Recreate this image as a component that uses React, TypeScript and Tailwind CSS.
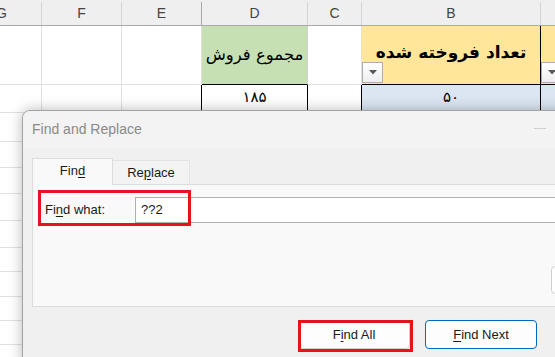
import React from "react";

const FilterBtn = () => (
  <div className="absolute left-0 top-[36px] w-[21px] h-[21px] border border-[#adadad] bg-gradient-to-b from-white to-[#eeeeee] flex items-center justify-center">
    <svg width="8" height="5" viewBox="0 0 8 5">
      <path d="M0 0 L8 0 L4 4.5 Z" fill="#5a5a5a" />
    </svg>
  </div>
);

const U = ({ children }: { children: React.ReactNode }) => (
  <span className="underline underline-offset-[2px] decoration-[1px]">{children}</span>
);

export default function App() {
  const grid = "border-r border-b border-[#e1e1e1]";
  const lowerRows = [29, 26, 26, 27, 27, 24, 25, 24, 24, 24];
  return (
    <div className="relative w-[555px] h-[357px] overflow-hidden bg-white font-['Liberation_Sans',sans-serif]">
      {/* spreadsheet */}
      <div className="ml-[-38px] flex flex-col">
        {/* header */}
        <div className="flex h-[26px] bg-[#efefef] border-b border-[#a9a9a9] text-[14px] text-[#444]">
          <div className="w-[80px] shrink-0 flex items-center justify-center border-r border-[#d4d4d4] mt-[2px]">G</div>
          <div className="w-[80px] shrink-0 flex items-center justify-center border-r border-[#d4d4d4] mt-[2px]">F</div>
          <div className="w-[80px] shrink-0 flex items-center justify-center border-r border-[#a8a8a8] mt-[2px]">E</div>
          <div className="w-[106px] shrink-0 flex items-center justify-center border-r border-[#d4d4d4] mt-[2px]">D</div>
          <div className="w-[54px] shrink-0 flex items-center justify-center border-r border-[#d4d4d4] mt-[2px]">C</div>
          <div className="w-[179px] shrink-0 flex items-center justify-center border-r border-[#d4d4d4] mt-[2px]">B</div>
          <div className="w-[80px] shrink-0 mt-[2px]" />
        </div>
        {/* row 1 */}
        <div className="flex h-[59px]">
          <div className={`w-[80px] shrink-0 ${grid}`} />
          <div className={`w-[80px] shrink-0 ${grid}`} />
          <div className={`w-[80px] shrink-0 ${grid}`} />
          <div className="w-[106px] shrink-0 bg-[#c6e0b4] border-r border-[#d0d0d0] border-b border-b-black flex items-center justify-center font-['DejaVu_Sans',sans-serif] text-[16.5px] text-black whitespace-nowrap" dir="rtl">
            مجموع فروش
          </div>
          <div className={`w-[54px] shrink-0 ${grid}`} />
          <div className="relative w-[179px] shrink-0 bg-[#ffe699] border-r border-black border-b flex items-center justify-center pb-[5px] font-['DejaVu_Sans',sans-serif] font-bold text-[17px] text-black whitespace-nowrap" dir="rtl">
            تعداد فروخته شده
            <FilterBtn />
          </div>
          <div className="relative w-[80px] shrink-0 bg-[#ffe699] border-b border-black">
            <FilterBtn />
          </div>
        </div>
        {/* row 2 */}
        <div className="flex h-[28px] font-['DejaVu_Sans',sans-serif] text-[15px] text-black">
          <div className={`w-[80px] shrink-0 ${grid}`} />
          <div className={`w-[80px] shrink-0 ${grid}`} />
          <div className="w-[80px] shrink-0 border-r border-black border-b border-b-[#e1e1e1]" />
          <div className="w-[106px] shrink-0 border-r border-black border-b border-b-[#e1e1e1] flex items-start justify-center pt-[1px]">۱۸۵</div>
          <div className="w-[54px] shrink-0 border-r border-black border-b border-b-[#e1e1e1]" />
          <div className="w-[179px] shrink-0 bg-[#dce6f2] border-r border-black border-b border-b-[#e1e1e1] flex items-start justify-center pt-[1px]">۵۰</div>
          <div className="w-[80px] shrink-0 bg-[#dce6f2] border-b border-[#e1e1e1]" />
        </div>
        {lowerRows.map((h, i) => (
          <div key={i} className="flex" style={{ height: h }}>
            <div className={`w-[80px] shrink-0 ${grid}`} />
            <div className={`w-[80px] shrink-0 ${grid}`} />
            <div className={`w-[80px] shrink-0 ${grid}`} />
            <div className={`w-[106px] shrink-0 ${grid}`} />
            <div className={`w-[54px] shrink-0 ${grid}`} />
            <div className={`w-[179px] shrink-0 ${grid}`} />
            <div className={`w-[80px] shrink-0 ${grid}`} />
          </div>
        ))}
      </div>

      {/* dialog */}
      <div className="absolute left-[22px] top-[110px] w-[600px] h-[260px] rounded-[8px] border border-[#a3a3a3] bg-[#f0f0f0] shadow-[0_0_14px_rgba(0,0,0,0.28)] overflow-hidden flex flex-col text-[13px] text-[#1a1a1a]">
        {/* title bar */}
        <div className="relative h-[37px] shrink-0 bg-[#f3f3f3] flex items-center pl-[9px] text-[14px] text-[#8a8a8a]">
          Find and Replace
          <div className="absolute left-[511px] top-[17px] w-[12px] h-px bg-[#cfcfcf]" />
        </div>
        {/* body */}
        <div className="pl-[9px] pt-[10px] flex flex-col">
          <div className="flex items-end h-[26px]">
            <div className="relative z-10 w-[81px] h-[27px] mb-[-1px] bg-[#f9f9f9] border border-b-0 border-[#dcdcdc] flex items-center justify-center pb-[2px]">
              Fin<U>d</U>
            </div>
            <div className="w-[77px] h-[24px] bg-[#f3f3f3] border border-l-0 border-b-0 border-[#e3e3e3] flex items-center justify-center">
              Re<U>p</U>lace
            </div>
          </div>
          <div className="relative h-[123px] w-[600px] bg-[#f9f9f9] border border-[#dcdcdc] pt-[12px] pl-[12px]">
            <div className="flex items-center">
              <div className="w-[90px] shrink-0">
                Fi<U>n</U>d what:
              </div>
              <div className="h-[26px] w-[500px] bg-white border border-[#b0b0b0] flex items-center pl-[5px]">
                ??2
              </div>
            </div>
            <div className="absolute left-[5px] top-[5px] w-[153px] h-[36px] border-[3px] border-[#e8111f]" />
            <div className="absolute left-[518px] top-[81px] w-[80px] h-[28px] rounded-[4px] border border-[#cfcfcf] bg-white" />
          </div>
          {/* buttons */}
          <div className="flex pl-[266px] pt-[13px] gap-[15px]">
            <div className="relative w-[112px] h-[29px]">
              <div className="w-full h-full rounded-[4px] border border-[#d0d0d0] bg-[#fdfdfd] flex items-center justify-center">
                F<U>i</U>nd All
              </div>
              <div className="absolute left-0 top-0 w-[115px] h-[32px] border-[3px] border-[#e8111f]" />
            </div>
            <div className="w-[112px] h-[29px] rounded-[4px] border border-[#0067c0] bg-[#fdfdfd] flex items-center justify-center">
              <U>F</U>ind Next
            </div>
          </div>
        </div>
      </div>
    </div>
  );
}
